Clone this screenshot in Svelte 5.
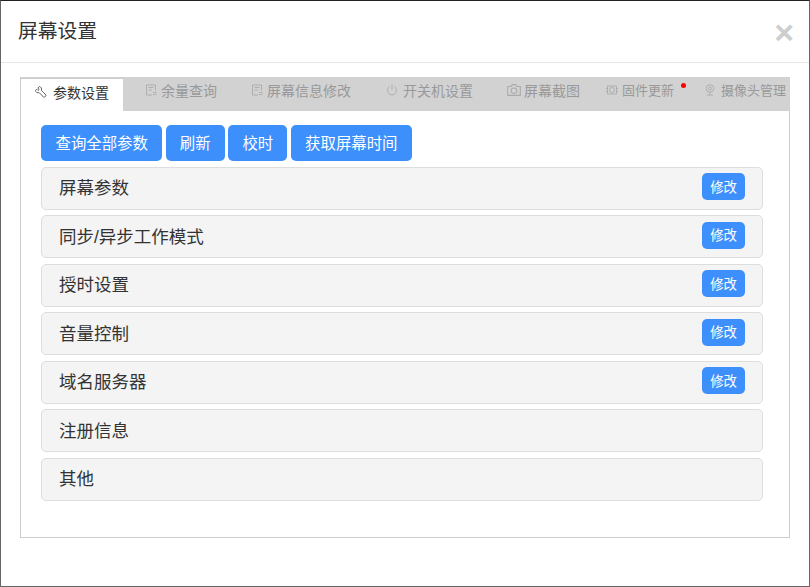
<script>
	const tabs = [
		{ name: '参数设置', icon: 'wrench', active: true },
		{ name: '余量查询', icon: 'doc' },
		{ name: '屏幕信息修改', icon: 'doc' },
		{ name: '开关机设置', icon: 'power' },
		{ name: '屏幕截图', icon: 'camera' },
		{ name: '固件更新', icon: 'chip', dot: true },
		{ name: '摄像头管理', icon: 'webcam' }
	];
	const actions = ['查询全部参数', '刷新', '校时', '获取屏幕时间'];
	const panels = [
		{ title: '屏幕参数', edit: true },
		{ title: '同步/异步工作模式', edit: true },
		{ title: '授时设置', edit: true },
		{ title: '音量控制', edit: true },
		{ title: '域名服务器', edit: true },
		{ title: '注册信息' },
		{ title: '其他' }
	];
</script>

<div class="modal">
	<header class="head">
		<h4>屏幕设置</h4>
		<span class="close">×</span>
	</header>
	<div class="body">
		<div class="tabs-box">
			<ul class="tabs">
				{#each tabs as tab}
					<li class="tab tab-{tab.icon}" class:active={tab.active}>
						<svg class="ico" viewBox="0 0 12 12" fill="none" stroke="currentColor" stroke-width="0.9">
							{#if tab.icon === 'wrench'}
								<path d="M4.300.6 2.900 2l1.300 1.400L3 4.500 1.700 3.200.5 4.400c.1 1.700 1.900 2.900 3.700 2.200l4.400 4.500c.8.700 3-1.400 2.300-2.200L6.400 4.400C7 2.500 6 .7 4.300.6Z" />
							{:else if tab.icon === 'doc'}
								<path d="M10.500 6.500V1h-9v10H7M3.500 3.500h5M3.500 6h3.500M8 8.500h3.500M8 10.500h3.500" />
							{:else if tab.icon === 'power'}
								<path d="M3.600 2.600a4.500 4.500 0 1 0 4.800 0M6 .6v5" />
							{:else if tab.icon === 'camera'}
								<path d="M.6 3h2.900l1-1.600h3l1 1.600h2.900v7.600H.6Z" /><circle cx="6" cy="6.600" r="2.400" />
							{:else if tab.icon === 'chip'}
								<path d="M1.500 2h9v8h-9ZM0 4.500h1.500M0 7.500h1.500M10.500 4.500H12M10.500 7.500H12" /><circle cx="6" cy="6" r="2.500" />
							{:else}
								<circle cx="6" cy="4.500" r="3.800" /><circle cx="6" cy="4.500" r="1.500" /><path d="M6 8.300v2M3 11h6" />
							{/if}
						</svg>
						<span>{tab.name}</span>
						{#if tab.dot}<i class="dot"></i>{/if}
					</li>
				{/each}
			</ul>
			<div class="pane">
				<div class="actions">
					{#each actions as label}
						<button class="btn">{label}</button>
					{/each}
				</div>
				<div class="panels">
					{#each panels as panel}
						<div class="panel">
							<span class="title">{panel.title}</span>
							{#if panel.edit}<button class="btn small">修改</button>{/if}
						</div>
					{/each}
				</div>
			</div>
		</div>
	</div>
</div>

<style>
	:global(body) {
		margin: 0;
		background: #666;
	}
	.modal {
		box-sizing: border-box;
		width: 810px;
		height: 587px;
		background: #fff;
		border: 1px solid #666;
		border-top-color: #222;
		font-family: "Liberation Sans", "Noto Sans CJK SC", sans-serif;
		color: #333;
		display: flex;
		flex-direction: column;
	}
	.head {
		height: 62px;
		box-sizing: border-box;
		border-bottom: 1px solid #e5e5e5;
		display: flex;
		align-items: center;
		justify-content: space-between;
		padding: 0 15px 0 17px;
		flex: none;
	}
	h4 {
		margin: 0;
		font-size: 19.800px;
		font-weight: 400;
		line-height: 1;
	}
	.close {
		font-size: 34px;
		font-weight: 700;
		color: #cdcfcf;
		line-height: 1;
	}
	.body {
		padding: 14px 19px 0 19px;
	}
	.tabs-box {
		box-sizing: border-box;
		height: 461px;
		width: 770px;
		border: 1px solid #ccc;
		border-top: 0;
	}
	.tabs {
		list-style: none;
		margin: 0 -1px 0 0;
		padding: 0;
		height: 34px;
		background: #d2d2d2;
		display: flex;
		font-size: 14px;
		color: #999;
	}
	.tab {
		position: relative;
		flex: none;
		display: flex;
		align-items: center;
		gap: 5px;
		white-space: nowrap;
		padding: 0 11px 9px 21px;
	}
	.tab.active {
		background: #fff;
		color: #333;
		width: 102px;
		height: 33px;
		margin-top: 1px;
		border-top: 1px solid #ccc;
		box-sizing: border-box;
		padding: 0 0 6px 14px;
		gap: 6px;
	}
	.tab-doc {
		gap: 4px;
		padding-left: 22px;
		padding-right: 12px;
	}
	.tab-power {
		padding-left: 23px;
	}
	.tab-camera {
		gap: 3px;
		padding-left: 23px;
	}
	.tab-camera .ico {
		width: 14px;
		height: 14px;
	}
	.tab-chip,
	.tab-webcam {
		font-size: 13px;
		padding-left: 15px;
		padding-right: 15px;
	}
	.tab-chip {
		gap: 4px;
	}
	.ico {
		width: 12px;
		height: 12px;
		flex: none;
		color: #aaa;
	}
	.active .ico {
		color: #555;
	}
	.dot {
		position: absolute;
		top: 6px;
		right: 3px;
		width: 5px;
		height: 5px;
		border-radius: 50%;
		background: #f00;
	}
	.pane {
		padding: 14px 20px 0 20.400px;
	}
	.actions {
		display: flex;
		gap: 3.600px;
	}
	.btn {
		border: 0;
		border-radius: 5px;
		background: #3d8ffc;
		color: #fff;
		font: inherit;
		font-size: 15.400px;
		height: 36px;
		padding: 0 14.150px 2px;
	}
	.btn.small {
		font-size: 13.400px;
		height: 27px;
		padding: 0 8.100px 2px;
		margin-top: -3px;
	}
	.panels {
		margin-top: 5.750px;
		margin-left: -0.400px;
		display: flex;
		flex-direction: column;
		gap: 5.500px;
		width: 722px;
	}
	.panel {
		box-sizing: border-box;
		height: 43px;
		background: #f4f4f4;
		border: 1px solid #ddd;
		border-radius: 5px;
		display: flex;
		align-items: center;
		justify-content: space-between;
		padding: 0 17px;
	}
	.title {
		font-size: 17.500px;
		line-height: 1;
		margin-top: 1px;
	}
</style>
